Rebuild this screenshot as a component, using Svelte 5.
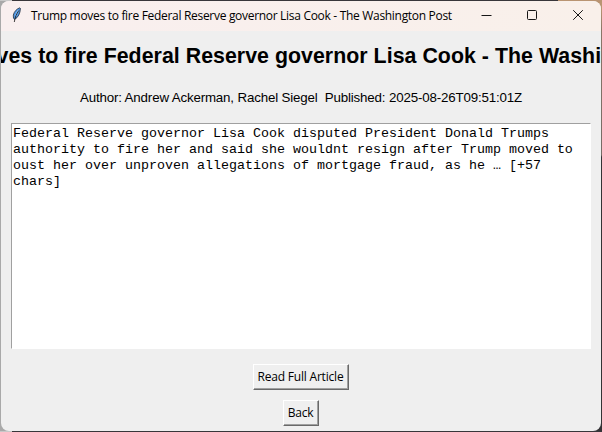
<script>
  const title = 'Trump moves to fire Federal Reserve governor Lisa Cook - The Washington Post';
  const meta = 'Author: Andrew Ackerman, Rachel Siegel  Published: 2025-08-26T09:51:01Z';
  const content = [
    'Federal Reserve governor Lisa Cook disputed President Donald Trumps',
    'authority to fire her and said she wouldnt resign after Trump moved to',
    'oust her over unproven allegations of mortgage fraud, as he … [+57',
    'chars]'
  ].join('\n');
</script>

<div class="desktop">
  <main class="window">
    <header class="titlebar">
      <svg class="feather" width="12" height="16" viewBox="0 0 12 16">
        <path d="M8.8 .8C6 1.7 3.2 4.4 2.3 8l.2 3.3 1.2 1C7 10.5 9.3 6.5 9.4 1.4Z" fill="#4f96e4" stroke="#26303c" stroke-width=".8" />
        <path d="M7.2 3.2 4.6 9" stroke="#8fc2f5" stroke-width="1.5" fill="none" />
        <path d="M7.8 3.5C5.4 7 4.1 10 3.3 15" stroke="#111" stroke-width=".8" fill="none" />
      </svg>
      <span class="caption">{title}</span>
      <nav class="controls">
        <button aria-label="Minimize"><svg width="12" height="12" viewBox="0 0 12 12"><path d="M1.5 6.5h10" /></svg></button>
        <button aria-label="Maximize"><svg width="12" height="12" viewBox="0 0 12 12"><rect x="1.5" y="1.5" width="9" height="9" rx="1" /></svg></button>
        <button aria-label="Close"><svg width="12" height="12" viewBox="0 0 12 12"><path d="m1.2 1.2 9.6 9.6m0-9.6-9.6 9.6" /></svg></button>
      </nav>
    </header>
    <h1>{title}</h1>
    <p class="meta">{meta}</p>
    <div class="content">{content}</div>
    <button class="push read">Read Full Article</button>
    <button class="push back">Back</button>
  </main>
</div>

<style>
  :global(body) { margin: 0; overflow: hidden; }
  .desktop {
    box-sizing: border-box;
    width: 602px;
    height: 432px;
    padding: 1px;
    background:
      linear-gradient(90deg, #c8c8c8 12px, #38363a 12px, #38363a 558px, #b99472 558px) top / 100% 1px no-repeat,
      linear-gradient(90deg, #c8c8c8 12px, #38363a 12px) bottom / 100% 1px no-repeat,
      linear-gradient(#b99472 8px, #8a7668 30px, #756b66 155px, #343336 157px) right / 10px 100% no-repeat,
      #a9a9a9;
  }
  .window {
    height: 430px;
    display: flex;
    flex-direction: column;
    align-items: center;
    overflow: hidden;
    border-radius: 8px;
    background: #efefef;
    color: #000;
  }
  .titlebar {
    align-self: stretch;
    flex: none;
    display: flex;
    align-items: center;
    height: 30px;
    background: linear-gradient(90deg, #f9efef, #f9f0ea);
  }
  .feather { flex: none; margin: -2px 8px 0 10px; }
  .caption {
    flex: 1;
    white-space: nowrap;
    font: 12px/16px "Open Sans", "Noto Sans", sans-serif;
    letter-spacing: -0.305px;
  }
  .controls { display: flex; flex: none; height: 30px; }
  .controls button {
    display: flex;
    align-items: center;
    justify-content: center;
    width: 46px;
    padding: 0 0 2px;
    border: 0;
    background: none;
  }
  .controls svg { fill: none; stroke: #161616; stroke-width: 1; }
  h1 {
    flex: none;
    margin: 12px 0 0;
    padding-left: 4px;
    white-space: nowrap;
    font: bold 21.33px/26px "Liberation Sans", Arial, sans-serif;
    letter-spacing: 0.035px;
  }
  .meta {
    flex: none;
    margin: 21px 0 0;
    white-space: pre;
    font: 13.33px/16px "Liberation Sans", Arial, sans-serif;
    letter-spacing: -0.16px;
  }
  .content {
    flex: none;
    box-sizing: border-box;
    width: 580px;
    height: 226px;
    margin-top: 17px;
    padding: 2px 1px 1px;
    border: 1px solid;
    border-color: #a0a0a0 #fff #fff #a0a0a0;
    background: #fff;
    white-space: pre;
    font: 13.33px/16px "Liberation Mono", "Courier New", monospace;
  }
  .push {
    flex: none;
    box-sizing: border-box;
    height: 26px;
    padding: 0;
    border: 1px solid;
    border-color: #fff #696969 #696969 #fff;
    box-shadow: inset -1px -1px #a0a0a0;
    background: #efefef;
    color: #000;
    white-space: nowrap;
    font: 12px/22px "Open Sans", "Noto Sans", sans-serif;
    letter-spacing: -0.2px;
  }
  .read { width: 96px; margin-top: 15px; padding-right: 1px; }
  .back { width: 36px; margin-top: 10px; padding-right: 1px; }
</style>
